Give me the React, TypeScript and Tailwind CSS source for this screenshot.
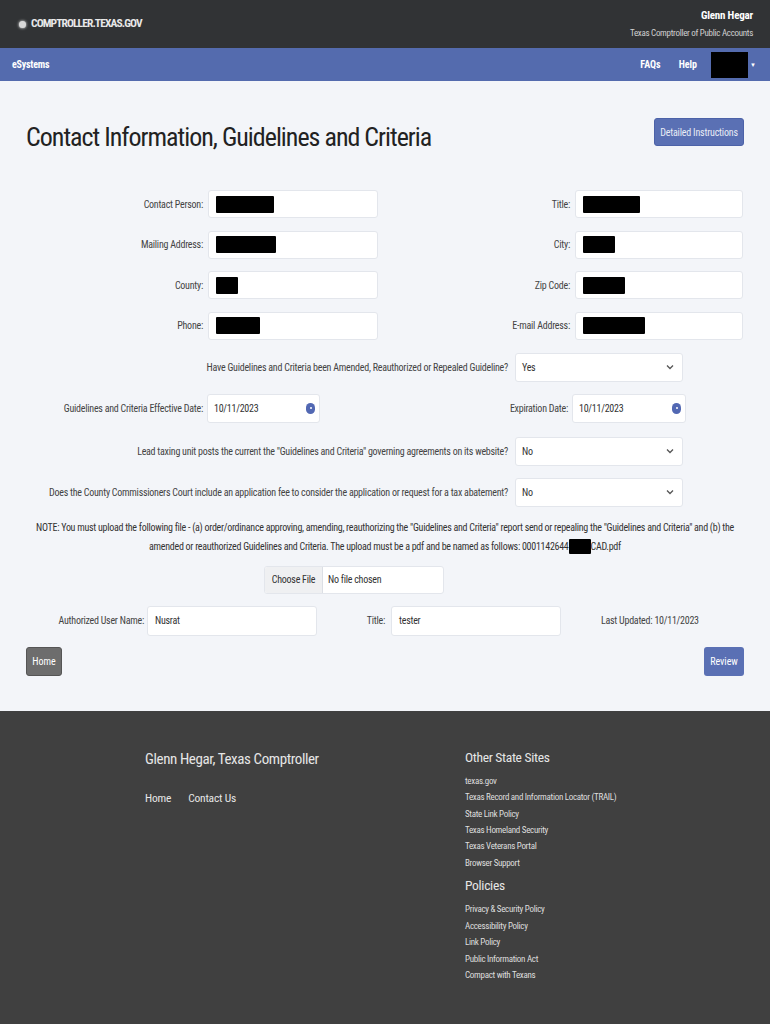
import React from "react";

const F = { fontFamily: "'Liberation Sans Narrow', 'Roboto Condensed', Roboto, sans-serif" };

function Box({ w, redact, text, cls = "" }: { w: number; redact?: number; text?: string; cls?: string }) {
  return (
    <div className={"h-[28px] bg-white border border-[#e3e6ec] rounded-[3px] flex items-center pl-[7px] " + cls} style={{ width: w }}>
      {redact ? <div className="h-[17px] bg-black rounded-[1px]" style={{ width: redact }} /> : null}
      {text ? <span className="text-[10px] tracking-[-0.25px] text-[#333]">{text}</span> : null}
    </div>
  );
}

function Select({ value }: { value: string }) {
  return (
    <div className="w-[168px] h-[29px] bg-white border border-[#e3e6ec] rounded-[3px] flex items-center justify-between pl-[6px] pr-[8px]">
      <span className="text-[10px] tracking-[-0.25px] text-[#333]">{value}</span>
      <svg width="8" height="6" viewBox="0 0 8 6"><path d="M1 1.5 L4 4.5 L7 1.5" stroke="#555" strokeWidth="1.3" fill="none" /></svg>
    </div>
  );
}

function DateBox({ w }: { w: number }) {
  return (
    <div className="h-[29px] bg-white border border-[#e3e6ec] rounded-[3px] flex items-center justify-between pl-[6px] pr-[4px]" style={{ width: w }}>
      <span className="text-[10px] tracking-[-0.25px] text-[#333]">10/11/2023</span>
      <span className="w-[9px] h-[11px] rounded-full bg-[#5268b3] flex items-center justify-center">
        <span className="w-[2px] h-[2px] bg-white rounded-full" />
      </span>
    </div>
  );
}

export default function App() {
  const lbl = "text-[10px] tracking-[-0.25px] text-[#444] text-right";
  return (
    <div className="w-[770px] min-h-[1024px] bg-[#404040]" style={F}>
      {/* header */}
      <div className="h-[48px] bg-[#313335] flex items-center justify-between pl-[19px] pr-[17px]">
        <div className="flex items-center gap-[5px]">
          <span className="w-[7px] h-[7px] rounded-full bg-[#d8d8d8] shadow-[0_0_3px_#fff]" />
          <span className="text-[11.5px] font-bold text-[#e8e8e8] tracking-[-0.9px]">COMPTROLLER.TEXAS.GOV</span>
        </div>
        <div className="flex flex-col items-end leading-none">
          <span className="text-[11px] font-bold text-white tracking-[-0.2px]">Glenn Hegar</span>
          <span className="text-[9px] text-[#d0d0d0] mt-[8px] tracking-[-0.3px]">Texas Comptroller of Public Accounts</span>
        </div>
      </div>
      {/* nav */}
      <div className="h-[33px] bg-[#546bae] flex items-center justify-between pl-[12px] pr-[14px]">
        <span className="text-[10px] font-bold text-white tracking-[-0.2px]">eSystems</span>
        <div className="flex items-center">
          <span className="text-[10px] font-bold text-white">FAQs</span>
          <span className="text-[10px] font-bold text-white ml-[18px]">Help</span>
          <span className="w-[37px] h-[26px] bg-black ml-[14px]" />
          <span className="text-[6px] text-white ml-[2px]">▼</span>
        </div>
      </div>
      {/* main */}
      <div className="bg-[#f3f5f9] px-[26px] pt-[37px] pb-[35px]">
        <div className="flex items-start justify-between">
          <h1 className="text-[26px] text-[#222] leading-none mt-[6px] tracking-[-1px]">Contact Information, Guidelines and Criteria</h1>
          <button className="h-[28px] w-[90px] bg-[#5a70b4] rounded-[3px] text-[10px] tracking-[-0.2px] text-[#e8ecf5] border border-[#4c62a8]">Detailed Instructions</button>
        </div>

        <div className="mt-[40px] grid grid-cols-[182px_170px_197px_168px] gap-y-[12.5px] items-center">
          <div className={lbl + " pr-[5px]"}>Contact Person:</div>
          <Box w={170} redact={58} />
          <div className={lbl + " pr-[5px]"}>Title:</div>
          <Box w={168} redact={57} />

          <div className={lbl + " pr-[5px]"}>Mailing Address:</div>
          <Box w={170} redact={60} />
          <div className={lbl + " pr-[5px]"}>City:</div>
          <Box w={168} redact={32} />

          <div className={lbl + " pr-[5px]"}>County:</div>
          <Box w={170} redact={22} />
          <div className={lbl + " pr-[5px]"}>Zip Code:</div>
          <Box w={168} redact={42} />

          <div className={lbl + " pr-[5px]"}>Phone:</div>
          <Box w={170} redact={44} />
          <div className={lbl + " pr-[5px]"}>E-mail Address:</div>
          <Box w={168} redact={62} />
        </div>

        <div className="mt-[13px] flex items-center">
          <div className={lbl + " w-[482px]"}>Have Guidelines and Criteria been Amended, Reauthorized or Repealed Guideline?</div>
          <div className="ml-[7px]"><Select value="Yes" /></div>
        </div>

        <div className="mt-[12px] grid grid-cols-[181px_113px_252px_114px] items-center">
          <div className={lbl + " pr-[4px]"}>Guidelines and Criteria Effective Date:</div>
          <DateBox w={113} />
          <div className={lbl + " pr-[4px]"}>Expiration Date:</div>
          <DateBox w={114} />
        </div>

        <div className="mt-[14px] flex items-center">
          <div className={lbl + " w-[482px]"}>Lead taxing unit posts the current the "Guidelines and Criteria" governing agreements on its website?</div>
          <div className="ml-[7px]"><Select value="No" /></div>
        </div>

        <div className="mt-[12px] flex items-center">
          <div className={lbl + " w-[482px] whitespace-nowrap"}>Does the County Commissioners Court include an application fee to consider the application or request for a tax abatement?</div>
          <div className="ml-[7px]"><Select value="No" /></div>
        </div>

        <p className="mt-[11px] text-[10px] tracking-[-0.28px] text-[#333] text-center leading-[19px] -mx-[6px] whitespace-nowrap">
          NOTE: You must upload the following file - (a) order/ordinance approving, amending, reauthorizing the "Guidelines and Criteria" report send or repealing the "Guidelines and Criteria" and (b) the
          <br />
          amended or reauthorized Guidelines and Criteria. The upload must be a pdf and be named as follows: 0001142644<span className="inline-block w-[22px] h-[15px] bg-black align-middle rounded-[1px]" />CAD.pdf
        </p>

        <div className="mt-[10px] flex justify-center">
          <div className="w-[180px] h-[28px] ml-[-62px] bg-white border border-[#e3e6ec] rounded-[3px] flex items-center overflow-hidden">
            <span className="h-full w-[58px] bg-[#eff0f2] border-r border-[#dcdfe5] flex items-center justify-center text-[10px] tracking-[-0.25px] text-[#333]">Choose File</span>
            <span className="ml-[5px] text-[10px] tracking-[-0.25px] text-[#333]">No file chosen</span>
          </div>
        </div>

        <div className="mt-[12px] flex items-center">
          <div className={lbl + " w-[118px]"}>Authorized User Name:</div>
          <div className="ml-[3px]"><Box w={170} text="Nusrat" cls="h-[30px]" /></div>
          <div className={lbl + " w-[68px]"}>Title:</div>
          <div className="ml-[6px]"><Box w={170} text="tester" cls="h-[30px]" /></div>
          <div className="ml-[40px] text-[10px] tracking-[-0.25px] text-[#444]">Last Updated: 10/11/2023</div>
        </div>

        <div className="mt-[11px] flex justify-between">
          <button className="h-[29px] w-[36px] bg-[#6d6d6d] border border-[#555] rounded-[3px] text-[10px] text-white">Home</button>
          <button className="h-[29px] w-[40px] bg-[#5a70b4] rounded-[3px] text-[10px] text-white">Review</button>
        </div>
      </div>
      {/* footer */}
      <div className="bg-[#404040] pt-[36px] pb-[40px] flex">
        <div className="ml-[145px] w-[320px]">
          <div className="text-[15px] tracking-[-0.4px] text-[#e6e6e6] mt-[1px]">Glenn Hegar, Texas Comptroller</div>
          <div className="mt-[20px] flex gap-[17px] text-[11.5px] tracking-[-0.2px] text-[#e6e6e6]">
            <span>Home</span>
            <span>Contact Us</span>
          </div>
        </div>
        <div>
          <div className="text-[13.5px] tracking-[-0.3px] text-[#e6e6e6]">Other State Sites</div>
          <ul className="mt-[6px] text-[9px] tracking-[-0.3px] text-[#dedede] leading-[16.4px]">
            <li>texas.gov</li>
            <li>Texas Record and Information Locator (TRAIL)</li>
            <li>State Link Policy</li>
            <li>Texas Homeland Security</li>
            <li>Texas Veterans Portal</li>
            <li>Browser Support</li>
          </ul>
          <div className="mt-[4px] text-[13.5px] tracking-[-0.3px] text-[#e6e6e6]">Policies</div>
          <ul className="mt-[6px] text-[9px] tracking-[-0.3px] text-[#dedede] leading-[16.4px]">
            <li>Privacy &amp; Security Policy</li>
            <li>Accessibility Policy</li>
            <li>Link Policy</li>
            <li>Public Information Act</li>
            <li>Compact with Texans</li>
          </ul>
        </div>
      </div>
    </div>
  );
}
